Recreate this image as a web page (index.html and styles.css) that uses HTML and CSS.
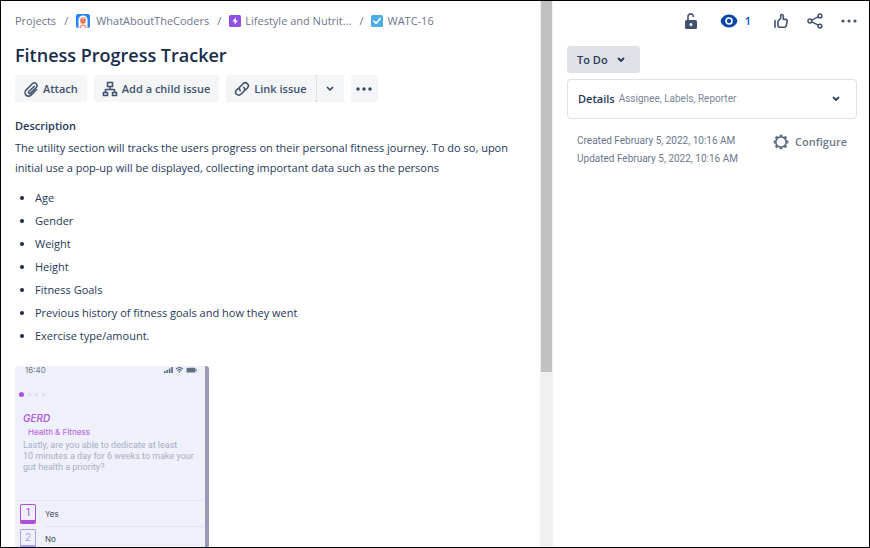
FILE: index.html
```html
<!DOCTYPE html>
<html lang="en">
<head>
<meta charset="utf-8">
<meta name="viewport" content="width=device-width, initial-scale=1">
<title>Fitness Progress Tracker</title>
<link rel="stylesheet" href="styles.css">
</head>
<body>
<div class="app">
  <main class="issue">
    <nav class="crumbs" aria-label="Breadcrumbs">
      <a href="#">Projects</a>
      <span class="slash">/</span>
      <a href="#" class="crumb-project"><svg width="14" height="14" viewBox="0 0 14 14"><rect width="14" height="14" rx="2" fill="#2684ff"/><path d="M2.500 14V6a4.500 4.500 0 0 1 9 0v8z" fill="#fff"/><path d="M3.500 14c0-2.500 1.500-3.500 3.500-3.500s3.500 1 3.500 3.500z" fill="#ff8f73"/><path d="M5 14c0-1.500 1-2 2-2s2 .5 2 2z" fill="#fff"/><ellipse cx="7" cy="6.500" rx="3" ry="3.500" fill="#ff8f73"/><path d="M4 5.200c1-2.500 5-2.500 6 0-1-.6-5-.6-6 0z" fill="#ffbdad"/><circle cx="5.700" cy="6.200" r=".6" fill="#42526e"/><circle cx="8.300" cy="6.200" r=".6" fill="#42526e"/><path d="M6 8.300h2" stroke="#de350b" stroke-width=".8"/></svg>WhatAboutTheCoders</a>
      <span class="slash">/</span>
      <a href="#"><svg width="12" height="12" viewBox="0 0 12 12"><rect width="12" height="12" rx="1.500" fill="#904ee2"/><path d="M6.800 2.200 3.400 6.600h2.200v3.200l3.200-4.300H6.800z" fill="#fff"/></svg>Lifestyle and Nutrit...</a>
      <span class="slash">/</span>
      <a href="#"><svg width="12" height="12" viewBox="0 0 12 12"><rect width="12" height="12" rx="1.500" fill="#4bade8"/><path d="m3 6.200 2.100 2.200L9.200 3.600" fill="none" stroke="#fff" stroke-width="1.600" stroke-linecap="round" stroke-linejoin="round"/></svg>WATC-16</a>
    </nav>
    <h1>Fitness Progress Tracker</h1>
    <div class="actions">
      <button type="button" class="btn"><svg width="16" height="16" viewBox="0 0 16 16" fill="none" stroke="#42526e" stroke-width="1.500" stroke-linecap="round"><path d="m11.300 5.200-5.600 5.600a1.150 1.150 0 0 0 1.600 1.600l6.100-6.100a2.700 2.700 0 0 0-3.800-3.800L3 9.100a3.500 3.500 0 0 0 5 5l5.600-5.600"/></svg>Attach</button>
      <button type="button" class="btn"><svg width="16" height="16" viewBox="0 0 16 16" fill="none" stroke="#42526e" stroke-width="1.600" stroke-linejoin="round"><path d="M5.500 1.500h5v4h-5zM1.500 11.500h4v3h-4zM10.500 11.500h4v3h-4zM8 5.500v3M3.500 11.500v-3h9v3"/></svg>Add a child issue</button>
      <div class="split">
        <button type="button" class="btn"><svg width="16" height="16" viewBox="0 0 16 16" fill="none" stroke="#42526e" stroke-width="1.600" stroke-linecap="round"><path d="M6.300 9.700a3 3 0 0 1 0-4.200l2.800-2.800a3 3 0 0 1 4.300 4.300l-1.700 1.600"/><path d="M9.700 6.300a3 3 0 0 1 0 4.200l-2.800 2.800A3 3 0 0 1 2.600 9l1.700-1.600"/></svg>Link issue</button>
        <button type="button" class="btn btn-icon" aria-label="More link options"><svg width="8" height="6" viewBox="0 0 8 6" fill="none" stroke="#344563" stroke-width="1.700" stroke-linecap="round" stroke-linejoin="round"><path d="m1.500 1.500 2.500 2.500 2.500-2.500"/></svg></button>
      </div>
      <button type="button" class="btn btn-icon" aria-label="More actions"><svg width="16" height="4" viewBox="0 0 16 4" fill="#344563"><circle cx="2" cy="2" r="1.700"/><circle cx="8" cy="2" r="1.700"/><circle cx="14" cy="2" r="1.700"/></svg></button>
    </div>
    <h2>Description</h2>
    <p class="text">The utility section will tracks the users progress on their personal fitness journey. To do so, upon initial use a pop-up will be displayed, collecting important data such as the persons</p>
    <ul class="list">
      <li>Age</li>
      <li>Gender</li>
      <li>Weight</li>
      <li>Height</li>
      <li>Fitness Goals</li>
      <li>Previous history of fitness goals and how they went</li>
      <li>Exercise type/amount.</li>
    </ul>
    <section class="phone" aria-label="Attached mockup">
      <div class="phone-status">
        <span>16:40</span>
        <svg width="34" height="8" viewBox="0 0 34 8" fill="#5c7080"><rect x="0" y="5" width="1.700" height="2"/><rect x="2.400" y="4" width="1.700" height="3"/><rect x="4.800" y="2.500" width="1.700" height="4.500"/><rect x="7.200" y="1" width="1.700" height="6"/><path d="M12 3.100a5 5 0 0 1 7 0M13.300 4.600a3.200 3.200 0 0 1 4.400 0" fill="none" stroke="#5c7080" stroke-width="1.200"/><path d="m14.300 5.600 1.200 1.600 1.200-1.600a2 2 0 0 0-2.400 0z"/><rect x="22.500" y="1.800" width="9" height="4.800" rx="1.200"/><rect x="32" y="3.300" width="1" height="1.700" rx=".5"/></svg>
      </div>
      <div class="phone-dots"><i class="on"></i><i></i><i></i><i></i></div>
      <div class="phone-brand">GERD</div>
      <div class="phone-topic">Health &amp; Fitness</div>
      <p class="phone-question">Lastly, are you able to dedicate at least<br>10 minutes a day for 6 weeks to make your<br>gut health a priority?</p>
      <div class="phone-answers">
        <div class="answer"><span class="key">1</span><span class="answer-text">Yes</span></div>
        <div class="answer second"><span class="key">2</span><span class="answer-text">No</span></div>
      </div>
    </section>
  </main>
  <div class="scrollbar"><div class="thumb"></div></div>
  <aside class="side">
    <div class="tools">
      <button type="button" aria-label="Restrictions"><svg width="14" height="18" viewBox="0 0 14 18"><path d="M4 8.500V4.600a2.700 2.700 0 0 1 5.300-.7v1" fill="none" stroke="#42526e" stroke-width="1.600"/><rect x="1" y="8" width="12" height="9" rx="1.500" fill="#42526e"/><circle cx="7" cy="12.500" r="1.500" fill="#fff"/></svg></button>
      <button type="button" class="watch" aria-label="Watchers: 1"><svg width="18" height="14" viewBox="0 0 18 14"><path d="M9 .5C4.500.5.700 4.200.700 7S4.500 13.500 9 13.500 17.300 9.800 17.300 7 13.500.5 9 .5z" fill="#0747a6"/><circle cx="9" cy="7" r="3" fill="none" stroke="#fff" stroke-width="1.700"/><circle cx="9" cy="7" r="1.200" fill="#0747a6"/></svg>1</button>
      <button type="button" aria-label="Like"><svg width="16" height="16" viewBox="0 0 16 16" fill="none" stroke="#42526e" stroke-width="1.600" stroke-linejoin="round" stroke-linecap="round"><path d="M2 7.500v6.700M5 8.200l2.700-3V2.600c0-1.500 2.600-1.400 2.600.4v3.400h2.500c1 0 1.600.8 1.400 1.700l-1 4.700c-.2.800-.8 1.400-1.600 1.400H6.400c-.8 0-1.400-.6-1.400-1.400z"/></svg></button>
      <button type="button" aria-label="Share"><svg width="16" height="16" viewBox="0 0 16 16" fill="none" stroke="#42526e" stroke-width="1.500"><circle cx="2.900" cy="8" r="1.900"/><circle cx="12.900" cy="2.900" r="1.900"/><circle cx="12.900" cy="13.100" r="1.900"/><path d="m4.700 7.200 6.500-3.400M4.700 8.800l6.500 3.400"/></svg></button>
      <button type="button" aria-label="More"><svg width="16" height="4" viewBox="0 0 16 4" fill="#42526e"><circle cx="2" cy="2" r="1.600"/><circle cx="8" cy="2" r="1.600"/><circle cx="14" cy="2" r="1.600"/></svg></button>
    </div>
    <button type="button" class="status">To Do<svg width="8" height="6" viewBox="0 0 8 6" fill="none" stroke="#253858" stroke-width="1.800" stroke-linecap="round" stroke-linejoin="round"><path d="m1.500 1.500 2.500 2.500 2.500-2.500"/></svg></button>
    <button type="button" class="details" aria-expanded="false"><span class="details-title">Details</span><span class="details-hint">Assignee, Labels, Reporter</span><svg width="8" height="6" viewBox="0 0 8 6" fill="none" stroke="#344563" stroke-width="1.800" stroke-linecap="round" stroke-linejoin="round"><path d="m1.500 1.500 2.500 2.500 2.500-2.500"/></svg></button>
    <div class="meta">
      <div class="dates">
        <div>Created February 5, 2022, 10:16 AM</div>
        <div>Updated February 5, 2022, 10:16 AM</div>
      </div>
      <button type="button" class="configure"><svg width="16" height="16" viewBox="0 0 16 16" fill="none" stroke="#5e6c84"><circle cx="8" cy="8" r="5.200" stroke-width="1.700"/><path d="M8 2.500V.7M8 13.500v1.800M2.500 8H.7M13.500 8h1.800M4.100 4.100 2.700 2.700M11.900 4.100l1.400-1.400M4.100 11.900l-1.400 1.400M11.900 11.900l1.400 1.400" stroke-width="2.800"/></svg>Configure</button>
    </div>
  </aside>
</div>
</body>
</html>
```
FILE: styles.css
```css
* {
  box-sizing: border-box;
}

body {
  margin: 0;
  font-family: "Open Sans", "Noto Sans", sans-serif;
  font-size: 11px;
  line-height: 20px;
  color: #253858;
  background: #fff;
}

.app {
  display: flex;
  height: 100vh;
  border: 1px solid #000;
  overflow: hidden;
}

button {
  display: flex;
  align-items: center;
  margin: 0;
  padding: 0;
  border: 0;
  background: none;
  font: inherit;
  color: inherit;
  cursor: pointer;
}

svg {
  display: block;
  flex: none;
}

h1,
h2,
p,
ul {
  margin: 0;
}

/* Issue column */
.issue {
  flex: 1;
  min-width: 0;
  padding: 10px 14px 0;
  overflow: hidden;
}

.crumbs {
  display: flex;
  align-items: center;
  gap: 8px;
  height: 20px;
  white-space: nowrap;
  color: #6b778c;
}

.crumbs a {
  display: flex;
  align-items: center;
  gap: 4px;
  color: inherit;
  text-decoration: none;
}

.crumbs .crumb-project {
  gap: 6px;
}

h1 {
  margin-top: 12px;
  font-size: 18px;
  line-height: 24px;
  font-weight: 600;
  color: #172b4d;
}

.actions {
  display: flex;
  gap: 7px;
  margin-top: 8px;
}

.btn {
  gap: 4px;
  height: 27px;
  padding: 0 9px 0 8px;
  border-radius: 3px;
  background: #f4f5f7;
  font-weight: 600;
  color: #42526e;
  white-space: nowrap;
}

.split {
  display: flex;
  gap: 1px;
  border-radius: 3px;
  background: #dfe1e6;
}

.btn-icon {
  justify-content: center;
  width: 27px;
  padding: 0;
}

h2 {
  margin-top: 14px;
  font-size: 11px;
  line-height: 20px;
  font-weight: 600;
}

.text {
  margin-top: 2px;
}

.list {
  margin-top: 8px;
  padding-left: 20px;
  line-height: 23px;
}

.list li::marker {
  color: #172b4d;
}

/* Attached phone mockup */
.phone {
  width: 194px;
  height: 240px;
  margin-top: 19px;
  border-right: 4px solid #979bb5;
  border-radius: 3px;
  background: #eef1fa;
  font-family: Inter, sans-serif;
  font-size: 8px;
  line-height: 11px;
  overflow: hidden;
}

.phone-status {
  display: flex;
  justify-content: space-between;
  align-items: center;
  height: 8px;
  padding: 0 7px 0 10px;
  line-height: 8px;
  color: #6b7785;
}

.phone-dots {
  display: flex;
  align-items: center;
  gap: 4px;
  height: 5px;
  margin: 18px 0 0 4px;
}

.phone-dots i {
  width: 3px;
  height: 3px;
  border-radius: 50%;
  background: #e4d7ee;
}

.phone-dots .on {
  width: 5px;
  height: 5px;
  background: #af4fdf;
}

.phone-brand {
  margin: 15px 0 0 8px;
  font-size: 10px;
  line-height: 12px;
  font-weight: 600;
  font-style: italic;
  color: #b660e2;
}

.phone-topic {
  margin: 3px 0 0 13px;
  font-weight: 500;
  color: #bd6ae5;
}

.phone-question {
  margin: 2px 0 0 8px;
  white-space: nowrap;
  font-family: Roboto, sans-serif;
  font-size: 9px;
  color: #a9aec4;
}

.phone-answers {
  margin-top: 27px;
  border-top: 1px solid #e2e5ef;
}

.answer {
  display: flex;
  align-items: center;
  gap: 9px;
  height: 25px;
  padding-left: 5px;
  color: #454852;
}

.key {
  width: 16px;
  height: 20px;
  border: 1px solid #b04ddb;
  border-bottom-width: 4px;
  border-radius: 2px;
  text-align: center;
  font-size: 10px;
  line-height: 15px;
  color: #b04ddb;
}

.second .key {
  border-color: #b19df0;
  color: #b19df0;
}

.answer-text {
  flex: 1;
  line-height: 24px;
}

.second .answer-text {
  border-top: 1px solid #e2e5ef;
}

/* Scrollbar track between the columns */
.scrollbar {
  flex: none;
  width: 13px;
  padding: 0 1px;
  background: #f0f0f0;
}

.thumb {
  height: 68%;
  background: #c1c1c1;
}

/* Side panel */
.side {
  flex: none;
  width: 36.400%;
  padding: 10px 12px 0 14px;
}

.tools {
  display: flex;
  justify-content: flex-end;
  align-items: center;
  gap: 18px;
  height: 20px;
}

.watch {
  gap: 7px;
  padding: 0 4px;
  font-weight: 600;
  color: #0052cc;
}

.status {
  gap: 9px;
  height: 27px;
  margin-top: 15px;
  padding: 0 15px 0 10px;
  border-radius: 3px;
  background: #dfe1e6;
  font-weight: 600;
}

.details {
  gap: 4px;
  width: 100%;
  height: 40px;
  margin-top: 6px;
  padding: 0 16px 0 10px;
  border: 1px solid #dfe1e6;
  border-radius: 4px;
}

.details-title {
  font-weight: 600;
}

.details-hint {
  flex: 1;
  text-align: left;
  font-family: Roboto, sans-serif;
  font-size: 10px;
  color: #7a869a;
}

.meta {
  display: flex;
  justify-content: space-between;
  align-items: flex-start;
  margin-top: 13px;
  padding: 0 10px;
}

.dates {
  font-family: Roboto, sans-serif;
  font-size: 10px;
  line-height: 18px;
  color: #6b778c;
  white-space: nowrap;
}

.configure {
  gap: 6px;
  font-weight: 600;
  color: #6b778c;
}
```
